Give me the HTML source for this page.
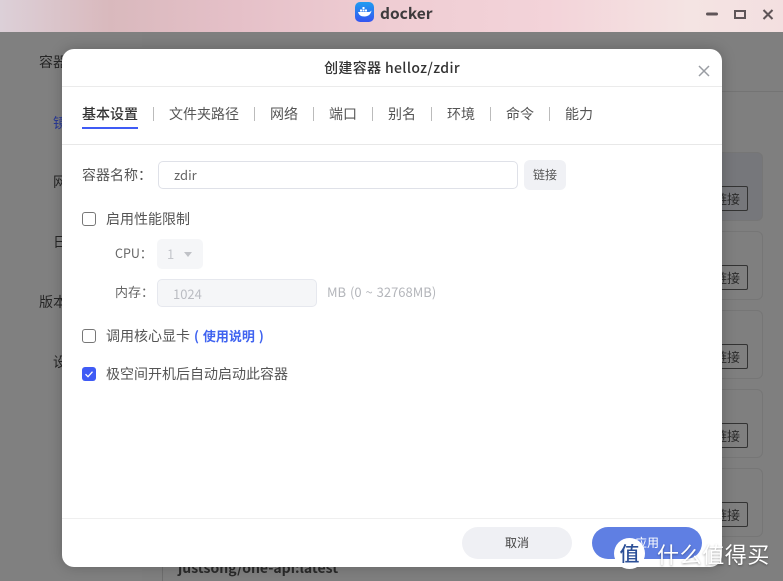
<!DOCTYPE html>
<html><head><meta charset="utf-8">
<style>
*{box-sizing:border-box}
html,body{margin:0;padding:0}
body{width:783px;height:581px;overflow:hidden;position:relative;background:#7f7f7f;font-family:"Noto Sans CJK SC","Liberation Sans",sans-serif;color:#333}
.a{position:absolute;white-space:nowrap}
.bar{left:0;top:0;width:783px;height:32px;background:linear-gradient(90deg,#dcd0d8 0,#d9b9bd 14%,#e5c0c8 30%,#efcdd3 50%,#f3d3d9 70%,#f4e4e3 88%,#f3dfe0 100%)}
.card{left:600px;width:163px;height:69px;border:1px solid #767676;border-radius:6px}
.cb{left:698px;width:50px;height:25px;border:1px solid #333;border-radius:2px;font-size:13px;line-height:23px;text-align:right;padding-right:7px;color:#2c2c2c}
.side{font-size:14px;color:#262626;line-height:20px}
.modal{left:62px;top:49px;width:660px;height:518px;background:#fff;border-radius:12px;box-shadow:0 0 14px rgba(0,0,0,.22)}
.t{font-size:14px;line-height:20px;top:104px;color:#555}
.sep{top:107px;width:1px;height:14px;background:#bbb}
.l{font-size:14px;line-height:20px;color:#555}
.ck{left:82px;width:14px;height:14px;border:1px solid #777;border-radius:3px;background:#fff}
</style></head>
<body>
<div class="a bar"></div>
<svg class="a" style="left:355px;top:2px" width="19" height="20" viewBox="0 0 19 20"><defs><linearGradient id="g" x1="0" y1="0" x2="0" y2="1"><stop offset="0" stop-color="#1f9cf0"/><stop offset="1" stop-color="#3554f0"/></linearGradient></defs><rect width="19" height="20" rx="5" fill="url(#g)"/><path d="M3 10h11c1 0 2-1 2.500-1.500-.5 3.500-3 6-7 6S4 13 3 10z" fill="#fff"/><rect x="5" y="7.500" width="2" height="2" fill="#fff"/><rect x="7.500" y="7.500" width="2" height="2" fill="#fff"/><rect x="10" y="7.500" width="2" height="2" fill="#fff"/><rect x="7.500" y="5" width="2" height="2" fill="#fff"/></svg>
<div class="a" style="left:380px;top:3px;font-size:15.500px;font-weight:700;line-height:20px;color:#3d3a3c">docker</div>
<svg class="a" style="left:700px;top:6px" width="80" height="20" viewBox="0 0 80 20"><rect x="6" y="6.500" width="12" height="3" rx="1.500" fill="#5f5558"/><rect x="35" y="5" width="10" height="7" fill="none" stroke="#5f5558" stroke-width="2"/><path d="M63.500 4l9 9M72.500 4l-9 9" stroke="#5f5558" stroke-width="2" fill="none"/></svg>

<div class="a" style="left:0;top:32px;width:142px;height:549px;background:#808080"></div>
<div class="a" style="left:142px;top:91px;width:641px;height:1px;background:#747474"></div>
<div class="a" style="left:162px;top:560px;width:1px;height:21px;background:#6e6e6e"></div>
<div class="a side" style="left:39px;top:52px">容器</div>
<div class="a side" style="left:53px;top:113px;color:#2a3a96">镜像</div>
<div class="a side" style="left:53px;top:172px">网络</div>
<div class="a side" style="left:53px;top:232px">日志</div>
<div class="a side" style="left:39px;top:292px">版本</div>
<div class="a side" style="left:53px;top:352px">设置</div>

<div class="a card" style="top:152px;background:#76777b"></div>
<div class="a card" style="top:231px"></div>
<div class="a card" style="top:310px"></div>
<div class="a card" style="top:389px"></div>
<div class="a card" style="top:468px"></div>
<div class="a cb" style="top:186px">链接</div>
<div class="a cb" style="top:265px">链接</div>
<div class="a cb" style="top:344px">链接</div>
<div class="a cb" style="top:423px">链接</div>
<div class="a cb" style="top:502px">链接</div>
<div class="a" style="left:178px;top:558px;font-size:14px;font-weight:700;line-height:20px;color:#2a2a2a">justsong/one-api:latest</div>

<div class="a modal"></div>
<div class="a" style="left:62px;top:49px;width:660px;text-align:center;font-size:14px;font-weight:500;line-height:38px;color:#333;letter-spacing:.35px">创建容器 helloz/zdir</div>
<svg class="a" style="left:697px;top:64px" width="14" height="14" viewBox="0 0 14 14"><path d="M2 2l10 10M12 2L2 12" stroke="#9a9da3" stroke-width="1.500" fill="none"/></svg>
<div class="a" style="left:62px;top:86px;width:660px;height:1px;background:#ebebeb"></div>

<div class="a t" style="left:82px;color:#333;font-weight:500">基本设置</div>
<div class="a" style="left:82px;top:127px;width:56px;height:2px;background:#3f5bf5"></div>
<div class="a sep" style="left:153px"></div>
<div class="a t" style="left:169px">文件夹路径</div>
<div class="a sep" style="left:254px"></div>
<div class="a t" style="left:270px">网络</div>
<div class="a sep" style="left:313px"></div>
<div class="a t" style="left:329px">端口</div>
<div class="a sep" style="left:372px"></div>
<div class="a t" style="left:388px">别名</div>
<div class="a sep" style="left:431px"></div>
<div class="a t" style="left:447px">环境</div>
<div class="a sep" style="left:490px"></div>
<div class="a t" style="left:506px">命令</div>
<div class="a sep" style="left:549px"></div>
<div class="a t" style="left:565px">能力</div>
<div class="a" style="left:62px;top:144px;width:660px;height:1px;background:#e8e8e8"></div>

<div class="a l" style="left:82px;top:165px">容器名称：</div>
<div class="a" style="left:158px;top:161px;width:360px;height:28px;border:1px solid #dfe1e8;border-radius:5px;background:#fff;font-size:13px;line-height:26px;padding-left:15px;color:#666">zdir</div>
<div class="a" style="left:524px;top:160px;width:42px;height:30px;background:#f0f1f5;border-radius:6px;text-align:center;font-size:12px;line-height:30px;color:#555">链接</div>

<div class="a ck" style="top:212px"></div>
<div class="a l" style="left:106px;top:209px">启用性能限制</div>
<div class="a" style="left:115px;top:244px;font-size:12.500px;line-height:18px;color:#666">CPU：</div>
<div class="a" style="left:157px;top:239px;width:46px;height:30px;background:#f5f6f8;border-radius:5px;font-size:13px;line-height:30px;padding-left:10px;color:#c4c6cb">1</div>
<div class="a" style="left:184px;top:252px;width:0;height:0;border-left:4px solid transparent;border-right:4px solid transparent;border-top:5px solid #c0c2c7"></div>
<div class="a" style="left:115px;top:283px;font-size:13px;line-height:18px;color:#666">内存：</div>
<div class="a" style="left:157px;top:279px;width:160px;height:28px;background:#f5f6f8;border:1px solid #e6e8ee;border-radius:5px;font-size:13px;line-height:27px;padding-left:15px;color:#bbbdc3">1024</div>
<div class="a" style="left:327px;top:283px;font-size:13px;line-height:18px;color:#b4b6bb;word-spacing:1px">MB (0 ~ 32768MB)</div>

<div class="a ck" style="top:329px"></div>
<div class="a l" style="left:106px;top:326px">调用核心显卡</div>
<div class="a" style="left:194px;top:326px;font-size:13px;line-height:20px;font-weight:700;color:#3f63f0;word-spacing:1px">( 使用说明 )</div>
<div class="a" style="left:82px;top:367px;width:14px;height:14px;border-radius:3px;background:#3f5bf5"></div>
<svg class="a" style="left:82px;top:367px" width="14" height="14" viewBox="0 0 14 14"><path d="M3.500 7.200l2.500 2.500 4.500-5" stroke="#fff" stroke-width="1.300" fill="none"/></svg>
<div class="a l" style="left:106px;top:364px">极空间开机后自动启动此容器</div>

<div class="a" style="left:62px;top:518px;width:660px;height:1px;background:#efefef"></div>
<div class="a" style="left:462px;top:527px;width:110px;height:32px;border-radius:16px;background:#eff0f4;text-align:center;font-size:12px;line-height:32px;color:#444">取消</div>
<div class="a" style="left:592px;top:527px;width:110px;height:32px;border-radius:16px;background:#5f7fe3;text-align:center;font-size:12px;line-height:32px;color:#fff">应用</div>

<div class="a" style="left:614px;top:538px;width:31px;height:31px;border-radius:50%;background:#fff;text-align:center;font-size:20px;font-weight:500;line-height:30px;color:#2b4f97">值</div>
<div class="a" style="left:657px;top:541px;font-size:22px;line-height:26px;color:#fff;letter-spacing:.6px;text-shadow:0 1px 2px rgba(0,0,0,.35)">什么值得买</div>
</body></html>
